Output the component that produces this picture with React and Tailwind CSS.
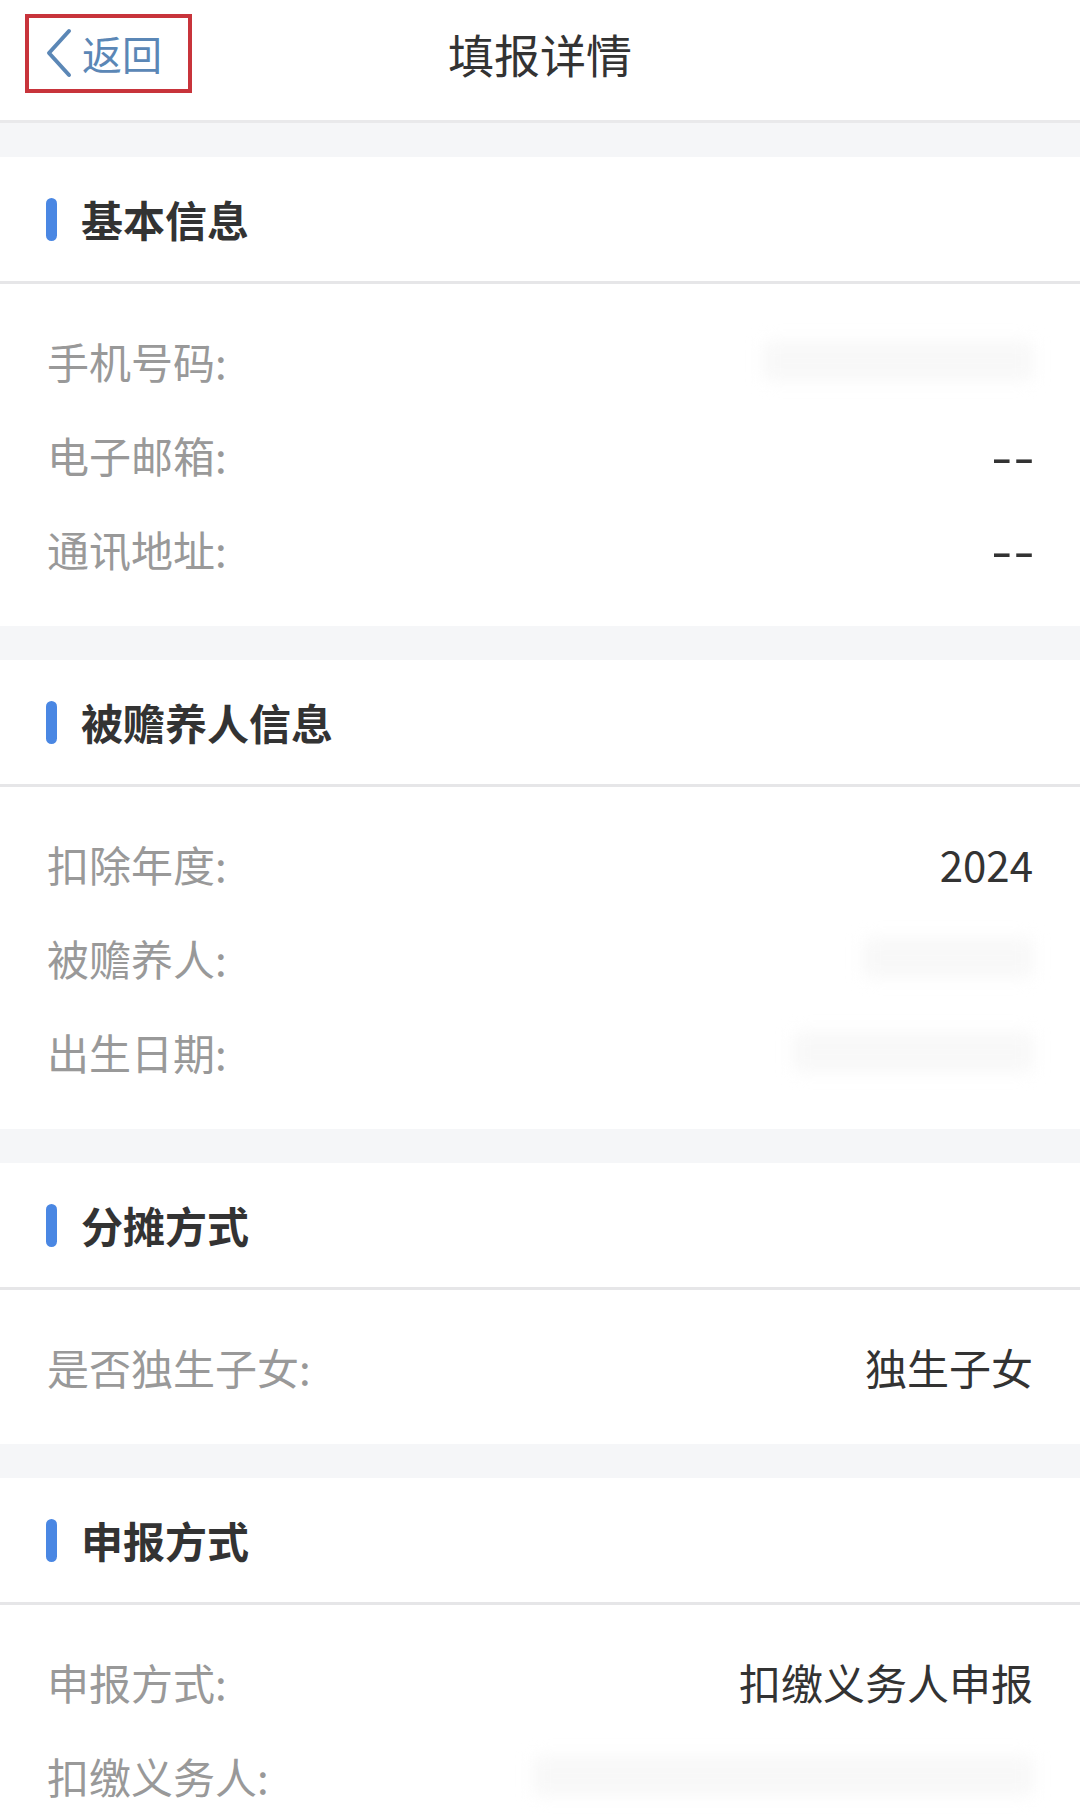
import React from "react";

const sections = [
  {
    title: "基本信息",
    rows: [
      { label: "手机号码:", blur: "w-[270px]" },
      { label: "电子邮箱:", value: "--", dash: true },
      { label: "通讯地址:", value: "--", dash: true },
    ],
  },
  {
    title: "被赡养人信息",
    rows: [
      { label: "扣除年度:", value: "2024" },
      { label: "被赡养人:", blur: "w-[170px]" },
      { label: "出生日期:", blur: "w-[240px]" },
    ],
  },
  {
    title: "分摊方式",
    rows: [{ label: "是否独生子女:", value: "独生子女" }],
  },
  {
    title: "申报方式",
    rows: [
      { label: "申报方式:", value: "扣缴义务人申报" },
      { label: "扣缴义务人:", blur: "w-[500px]" },
    ],
  },
];

function Row({ row }) {
  return (
    <div className="flex h-[94px] items-center justify-between">
      <span className="text-[42px] leading-none text-[#999999]">{row.label}</span>
      {row.blur ? (
        <div className={`${row.blur} h-[40px] rounded-md bg-[#f8f8f8] blur-sm`} />
      ) : (
        <span
          className={
            row.dash
              ? "mr-[-3px] inline-block origin-right scale-x-[1.4] text-[42px] leading-none font-medium tracking-[1px] text-[#333333]"
              : "text-[42px] leading-none text-[#333333]"
          }
        >
          {row.value}
        </span>
      )}
    </div>
  );
}

export default function App() {
  return (
    <div
      className="min-h-screen w-[1080px] bg-white"
      style={{ fontFamily: '"Noto Sans CJK SC", "Noto Sans", sans-serif' }}
    >
      {/* header */}
      <div className="grid h-[123px] grid-cols-[1fr_auto_1fr] items-center border-b-[3px] border-[#e9e9eb] pb-[14px]">
        <div className="pl-[25px]">
          <div className="flex h-[79px] w-[167px] items-center gap-[10px] border-[4px] border-[#c8343b] pl-[17px]">
            <svg width="26" height="50" viewBox="0 0 26 50" fill="none">
              <path
                d="M23 3 L3 25 L23 47"
                stroke="#5b87b6"
                strokeWidth="4"
                strokeLinecap="round"
                strokeLinejoin="round"
              />
            </svg>
            <span className="text-[40px] leading-none text-[#5b87b6]">返回</span>
          </div>
        </div>
        <h1 className="text-[46px] leading-none font-normal text-[#333333]">填报详情</h1>
        <div />
      </div>

      {sections.map((s, i) => (
        <div key={i}>
          <div className="h-[34px] bg-[#f5f6f8]" />
          <div className="flex h-[127px] items-center gap-[24px] border-b-[3px] border-[#e6e6e8] pl-[46px]">
            <div className="h-[43px] w-[11px] rounded-full bg-[#4a87e3]" />
            <span className="text-[42px] leading-none font-bold text-[#333333]">{s.title}</span>
          </div>
          <div className="px-[47px] py-[30px]">
            {s.rows.map((r, j) => (
              <Row key={j} row={r} />
            ))}
          </div>
        </div>
      ))}
    </div>
  );
}
